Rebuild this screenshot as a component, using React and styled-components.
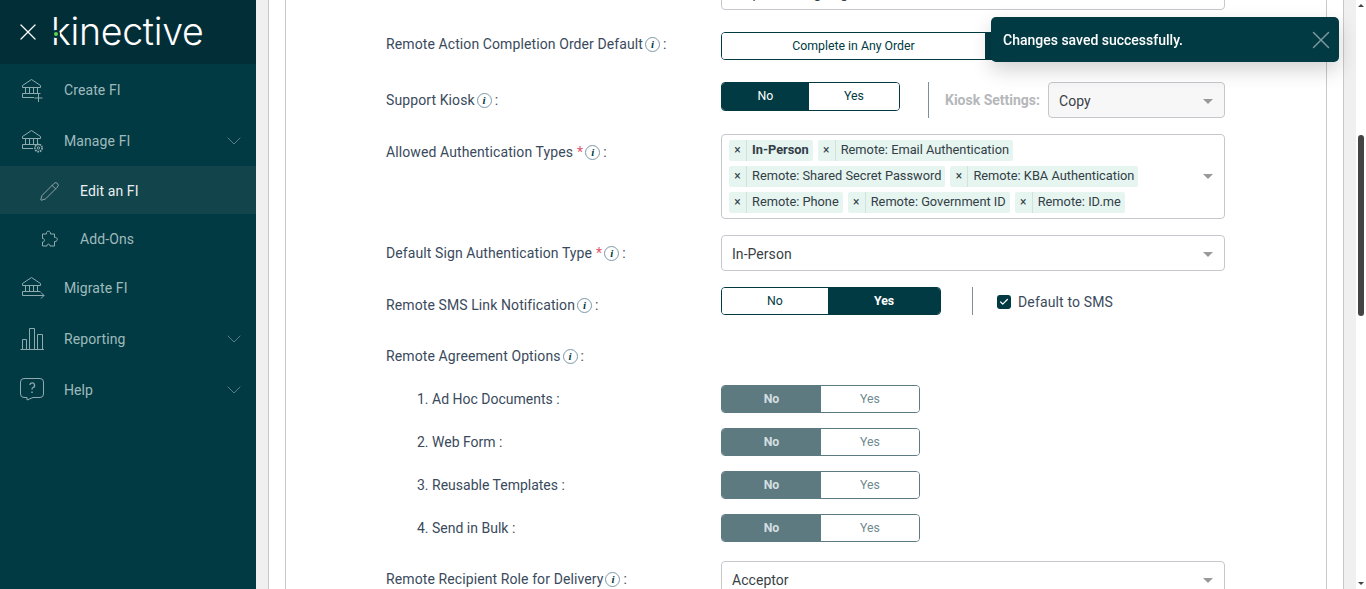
import React from "react";
import styled, { createGlobalStyle } from "styled-components";
import { ChevronDown, Pencil, X, Check } from "lucide-react";

const GlobalStyle = createGlobalStyle`
  html, body {
    margin: 0;
    height: 100%;
    overflow: hidden;
    background: #f0f0f0;
    font-family: Roboto, "Liberation Sans", sans-serif;
  }
`;

const Page = styled.div`
  display: flex;
  height: 589px;
  overflow: hidden;
`;

const Sidebar = styled.aside`
  flex: 0 0 256px;
  background: #023a43;
`;

const Brand = styled.div`
  display: flex;
  align-items: center;
  height: 64px;
  padding-left: 14px;
  gap: 9px;
  background: #012e37;
  color: #fff;
`;

const LogoMark = styled.div`
  position: relative;
  font-family: Inter, sans-serif;
  font-weight: 300;
  font-size: 37.5px;
  line-height: 36px;
  letter-spacing: -0.3px;
  color: #fff;

  &::after {
    content: "";
    position: absolute;
    left: 3px;
    top: 18px;
    width: 4px;
    height: 4px;
    border-radius: 50%;
    background: #5fd34f;
    box-shadow: 0 0 0 2px #012e37;
  }
`;

const NavItem = styled.div`
  display: flex;
  align-items: center;
  box-sizing: border-box;
  height: ${(p) => (p.$sub ? 48 : 51)}px;
  padding: ${(p) => (p.$sub ? 2 : 0)}px 10px 0 ${(p) => (p.$sub ? 39 : 20)}px;
  background: ${(p) => (p.$active ? "#12444c" : "transparent")};
  color: ${(p) => (p.$active ? "#e9f0f1" : "#9fbabd")};
  font-size: 14px;
  letter-spacing: 0.1px;
`;

const NavIcon = styled.span`
  display: flex;
  flex: 0 0 ${(p) => (p.$sub ? 41 : 44)}px;
  color: ${(p) => (p.$active ? "#9fb0b3" : "#8fabaf")};
`;

const NavLabel = styled.span`
  flex: 1;
`;

const NavChevron = styled(ChevronDown)`
  color: #7f9ea3;
`;

const Gutter = styled.main`
  flex: 1;
  min-width: 0;
  padding: 0 12px;
  background: #f0f0f0;
`;

const Panel = styled.div`
  height: 100%;
  padding: 0 16px;
  background: #fff;
  border-left: 1px solid #c9c9c9;
  border-right: 1px solid #c9c9c9;
`;

const Card = styled.section`
  height: 100%;
  overflow: hidden;
  padding-left: 100px;
  border-left: 1px solid #c9c9c9;
  border-right: 1px solid #c9c9c9;
`;

/* page is scrolled, first field sits mostly above the fold */
const Form = styled.div`
  margin-top: -26px;
`;

const Row = styled.div`
  display: grid;
  grid-template-columns: 335px 504px;
  margin-top: ${(p) => p.$gap ?? 16}px;
`;

const Label = styled.div`
  padding: ${(p) => p.$pad ?? 8}px 0 0 ${(p) => (p.$nested ? 31 : 0)}px;
  font-size: 14px;
  line-height: 20px;
  letter-spacing: ${(p) => (p.$nested ? 0 : 0.1)}px;
  color: #3a4a5c;
  white-space: nowrap;
`;

const Info = styled.span`
  display: inline-flex;
  align-items: center;
  justify-content: center;
  box-sizing: border-box;
  width: 15px;
  height: 15px;
  margin: 0 3px 0 2px;
  vertical-align: 1px;
  border: 1px solid #7d99a8;
  border-radius: 50%;
  font-family: "Liberation Serif", serif;
  font-style: italic;
  font-weight: 700;
  font-size: 11px;
  line-height: 1;
  color: #023a43;
`;

const Required = styled.span`
  margin-left: 4px;
  color: #e2566c;
`;

const Select = styled.div`
  display: flex;
  align-items: center;
  justify-content: space-between;
  box-sizing: border-box;
  height: 36px;
  width: ${(p) => p.$width ?? 504}px;
  padding: 2px 11px 0 10px;
  background: ${(p) => (p.$muted ? "#f7f7f7" : "#fff")};
  border: 1px solid #c4c8cc;
  border-radius: 4px;
  font-size: 14px;
  letter-spacing: 0.05px;
  color: #3a3f45;
`;

const Caret = styled.span`
  width: 0;
  height: 0;
  border-left: 5px solid transparent;
  border-right: 5px solid transparent;
  border-top: 5px solid #999;
`;

const Controls = styled.div`
  display: flex;
  align-items: flex-start;
`;

const Toggle = styled.div`
  display: flex;
  justify-self: start;
  box-sizing: border-box;
  height: ${(p) => p.$height ?? 28}px;
  border: 1px solid ${(p) => (p.$disabled ? "#5c7a80" : "#023a43")};
  border-radius: 4px;
  overflow: hidden;
`;

const ToggleOption = styled.div`
  display: flex;
  align-items: center;
  justify-content: center;
  box-sizing: border-box;
  width: ${(p) => p.$width}px;
  padding-bottom: ${(p) => (p.$raised ? 2 : 0)}px;
  font-size: 12.3px;
  font-weight: ${(p) => (p.$on && p.$bold ? 700 : 400)};
  background: ${(p) => (p.$on ? (p.$disabled ? "#5c7a80" : "#023a43") : "#fff")};
  color: ${(p) => {
    if (p.$on) return p.$disabled ? "#d5dee0" : "#fff";
    return p.$disabled ? "#6f8a90" : "#023a43";
  }};
`;

const Divider = styled.div`
  width: 1px;
  height: ${(p) => p.$height}px;
  margin: 0 ${(p) => p.$right}px 0 ${(p) => p.$left}px;
  background: #7d8f99;
`;

const KioskLabel = styled.span`
  margin-right: 8px;
  font-size: 14px;
  font-weight: 700;
  color: #b5b7ba;
  line-height: 36px;
`;

const Checkbox = styled.span`
  display: flex;
  align-items: center;
  justify-content: center;
  width: 14px;
  height: 14px;
  margin-right: 7px;
  border-radius: 3px;
  background: #023a43;
  color: #fff;
`;

const CheckRow = styled.div`
  display: flex;
  align-items: center;
  height: 30px;
  font-size: 14px;
  letter-spacing: 0.14px;
  color: #3a4a5c;
`;

const TagBox = styled.div`
  display: flex;
  align-items: center;
  box-sizing: border-box;
  width: 504px;
  min-height: 85px;
  padding: 0 11px 0 7px;
  border: 1px solid #c4c8cc;
  border-radius: 4px;
`;

const TagList = styled.div`
  flex: 1;
  display: flex;
  flex-direction: column;
  gap: 5px;
`;

const TagRow = styled.div`
  display: flex;
  gap: 5px;
`;

const Tag = styled.div`
  display: flex;
  align-items: center;
  box-sizing: border-box;
  height: 21px;
  padding: 0 4px 2px 0;
  background: #e6f5ef;
  border-radius: 2px;
  font-size: 12.8px;
  font-weight: ${(p) => (p.$bold ? 700 : 400)};
  color: #333d47;
`;

const TagRemove = styled.span`
  display: flex;
  align-items: center;
  justify-content: center;
  align-self: stretch;
  box-sizing: border-box;
  width: 18px;
  margin: 0 5px -2px 0;
  padding-bottom: 2px;
  border-right: 1px solid #d0e2db;
  font-weight: 400;
  font-size: 12px;
  color: #333d47;
`;

const Scrollbar = styled.div`
  flex: 0 0 10px;
  display: flex;
  flex-direction: column;
  align-items: center;
  padding: 4px 0;
  box-sizing: border-box;
  background: #fff;
`;

const ScrollUp = styled.span`
  border-left: 3px solid transparent;
  border-right: 3px solid transparent;
  border-bottom: 3px solid #444;
`;

const ScrollDown = styled.span`
  margin-top: auto;
  border-left: 3px solid transparent;
  border-right: 3px solid transparent;
  border-top: 3px solid #444;
`;

const ScrollThumb = styled.div`
  width: 6px;
  height: 181px;
  margin-top: 128px;
  border-radius: 3px;
  background: #444;
`;

const Toast = styled.div`
  position: fixed;
  top: 17px;
  left: 991px;
  display: flex;
  align-items: center;
  justify-content: space-between;
  box-sizing: border-box;
  width: 348px;
  height: 45px;
  padding: 0 3px 0 12px;
  background: #023a43;
  border-radius: 5px;
  box-shadow: 0 8px 20px rgba(0, 0, 0, 0.18);
  color: #fff;
  font-size: 14px;
  font-weight: 500;
`;

const ToastClose = styled(X)`
  color: #7a979b;
`;

const Bank = ({ children }) => (
  <svg width="26" height="25" viewBox="0 0 26 25" fill="none" stroke="currentColor" strokeWidth="1">
    <path d="M2.5 8.5 L11.5 2.5 L20.5 8.5 V10.5 H2.5 Z" />
    <path d="M5.5 10.5 V16.5 M9.5 10.5 V16.5 M13.5 10.5 V16.5 M17.5 10.5 V16.5" />
    <path d="M2.5 16.5 H20.5" />
    {children}
  </svg>
);

const CreateIcon = () => (
  <Bank>
    <path d="M14 20.5 H2.5 V16.5" />
    <path d="M18.5 17 V25 M14.5 21 H22.5" />
  </Bank>
);

const ManageIcon = () => (
  <Bank>
    <path d="M13 20.5 H2.5 V16.5" />
    <circle cx="18.5" cy="20" r="3.6" strokeWidth="1.7" strokeDasharray="1.7 0.8" />
    <circle cx="18.5" cy="20" r="1.2" />
  </Bank>
);

const MigrateIcon = () => (
  <Bank>
    <path d="M24 20.5 H2.5 V16.5" />
    <path d="M21 17.5 L24 20.5 L21 23.5" />
  </Bank>
);

const PuzzleIcon = () => (
  <svg width="20" height="20" viewBox="0 0 20 20" fill="none" stroke="currentColor" strokeWidth="1">
    <path d="M3.5 5 H7.5 C6.5 1.5 12 1 11.5 5 H15.5 V8.5 C19 7.5 19.5 13 15.5 12.5 V17 H11 C11.5 14.5 7.5 14.5 8 17 H3.5 V13 C6 13.5 6 9 3.5 9.5 Z" />
  </svg>
);

const ChartIcon = () => (
  <svg width="25" height="25" viewBox="0 0 25 25" fill="none" stroke="currentColor" strokeWidth="1">
    <path d="M0.5 23.5 H24" />
    <path d="M2.5 23 V13.5 H6.5 V23 M9.5 23 V2.5 H14.5 V23 M17.5 23 V8.5 H22.5 V23" />
  </svg>
);

const HelpIcon = () => (
  <svg width="25" height="25" viewBox="0 0 25 25" fill="none" stroke="currentColor" strokeWidth="1">
    <path d="M4 1.5 H20 A3.5 3.5 0 0 1 23.5 5 V17 A3.5 3.5 0 0 1 20 20.5 H13 L7 23 V20.5 H4 A3.5 3.5 0 0 1 0.5 17 V5 A3.5 3.5 0 0 1 4 1.5 Z" />
    <path d="M9.8 8 A2.4 2.4 0 1 1 13 10.5 C12 11 12 11.6 12 12.6" strokeWidth="1.3" />
    <path d="M12 14.6 V16" strokeWidth="1.5" />
  </svg>
);

const navItems = [
  { label: "Create FI", icon: <CreateIcon /> },
  { label: "Manage FI", icon: <ManageIcon />, chevron: true },
  { label: "Edit an FI", icon: <Pencil size={21} strokeWidth={1} />, sub: true, active: true },
  { label: "Add-Ons", icon: <PuzzleIcon />, sub: true },
  { label: "Migrate FI", icon: <MigrateIcon /> },
  { label: "Reporting", icon: <ChartIcon />, chevron: true },
  { label: "Help", icon: <HelpIcon />, chevron: true },
];

const tagRows = [
  [{ text: "In-Person", bold: true }, { text: "Remote: Email Authentication" }],
  [{ text: "Remote: Shared Secret Password" }, { text: "Remote: KBA Authentication" }],
  [{ text: "Remote: Phone" }, { text: "Remote: Government ID" }, { text: "Remote: ID.me" }],
];

const agreementOptions = [
  "1. Ad Hoc Documents",
  "2. Web Form",
  "3. Reusable Templates",
  "4. Send in Bulk",
];

export default function App() {
  return (
    <>
      <GlobalStyle />
      <Page>
        <Sidebar>
          <Brand>
            <X size={28} strokeWidth={1.1} />
            <LogoMark>kinective</LogoMark>
          </Brand>
          {navItems.map((item) => (
            <NavItem key={item.label} $sub={item.sub} $active={item.active}>
              <NavIcon $sub={item.sub} $active={item.active}>{item.icon}</NavIcon>
              <NavLabel>{item.label}</NavLabel>
              {item.chevron && <NavChevron size={24} strokeWidth={0.7} />}
            </NavItem>
          ))}
        </Sidebar>

        <Gutter>
          <Panel>
            <Card>
              <Form>
                <Row $gap={0}>
                  <span />
                  <Select>Sequential Signing Order</Select>
                </Row>

                <Row $gap={22}>
                  <Label $pad={2}>
                    Remote Action Completion Order Default<Info>i</Info>:
                  </Label>
                  <Toggle>
                    <ToggleOption $width={263}>Complete in Any Order</ToggleOption>
                    <ToggleOption $width={239} $on>Complete in Set Order</ToggleOption>
                  </Toggle>
                </Row>

                <Row $gap={22}>
                  <Label>
                    Support Kiosk<Info>i</Info>:
                  </Label>
                  <Controls>
                    <Toggle $height={29}>
                      <ToggleOption $width={87} $on $raised>No</ToggleOption>
                      <ToggleOption $width={90} $raised>Yes</ToggleOption>
                    </Toggle>
                    <Divider $height={36} $left={28} $right={16} />
                    <KioskLabel>Kiosk Settings:</KioskLabel>
                    <Select $width={177} $muted>
                      Copy
                      <Caret />
                    </Select>
                  </Controls>
                </Row>

                <Row>
                  <Label>
                    Allowed Authentication Types<Required>*</Required>
                    <Info>i</Info>:
                  </Label>
                  <TagBox>
                    <TagList>
                      {tagRows.map((tags, i) => (
                        <TagRow key={i}>
                          {tags.map((tag) => (
                            <Tag key={tag.text} $bold={tag.bold}>
                              <TagRemove>×</TagRemove>
                              {tag.text}
                            </Tag>
                          ))}
                        </TagRow>
                      ))}
                    </TagList>
                    <Caret />
                  </TagBox>
                </Row>

                <Row>
                  <Label>
                    Default Sign Authentication Type<Required>*</Required>
                    <Info>i</Info>:
                  </Label>
                  <Select>
                    In-Person
                    <Caret />
                  </Select>
                </Row>

                <Row>
                  <Label>
                    Remote SMS Link Notification<Info>i</Info>:
                  </Label>
                  <Controls>
                    <Toggle>
                      <ToggleOption $width={106}>No</ToggleOption>
                      <ToggleOption $width={112} $on $bold>Yes</ToggleOption>
                    </Toggle>
                    <Divider $height={28} $left={31} $right={24} />
                    <CheckRow>
                      <Checkbox>
                        <Check size={10} strokeWidth={3} />
                      </Checkbox>
                      Default to SMS
                    </CheckRow>
                  </Controls>
                </Row>

                <Row $gap={29}>
                  <Label $pad={0}>
                    Remote Agreement Options<Info>i</Info>:
                  </Label>
                </Row>

                {agreementOptions.map((name, i) => (
                  <Row key={name} $gap={i === 0 ? 19 : 15}>
                    <Label $nested $pad={4}>{name} :</Label>
                    <Toggle $disabled>
                      <ToggleOption $width={99} $on $bold $disabled>No</ToggleOption>
                      <ToggleOption $width={98} $disabled>Yes</ToggleOption>
                    </Toggle>
                  </Row>
                ))}

                <Row $gap={19}>
                  <Label>
                    Remote Recipient Role for Delivery<Info>i</Info>:
                  </Label>
                  <Select>
                    Acceptor
                    <Caret />
                  </Select>
                </Row>
              </Form>
            </Card>
          </Panel>
        </Gutter>

        <Scrollbar>
          <ScrollUp />
          <ScrollThumb />
          <ScrollDown />
        </Scrollbar>

        <Toast>
          Changes saved successfully.
          <ToastClose size={30} strokeWidth={1.2} />
        </Toast>
      </Page>
    </>
  );
}
